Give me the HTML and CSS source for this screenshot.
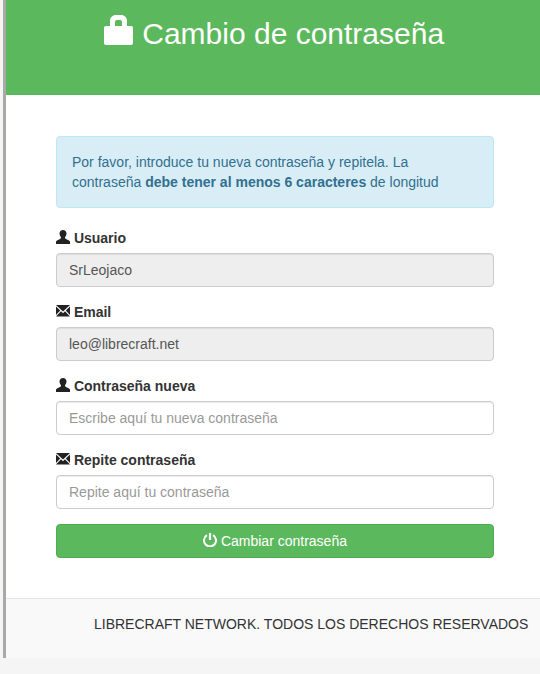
FILE: index.html
```html
<!DOCTYPE html>
<html lang="es">
<head>
    <meta charset="UTF-8">
    <meta name="viewport" content="width=device-width, initial-scale=1.0">
    <title>Cambio de contraseña</title>
    <link rel="stylesheet" href="styles.css">
</head>
<body>
    <div class="panel">
        <div class="panel-heading">
            <h1>
                <svg class="icon-lock" viewBox="0 0 29 30"><path fill="#fff" fill-rule="evenodd" d="M6 11V6c0-3.500 2.500-6 6-6h5c3.500 0 6 2.500 6 6v5h4c1.200 0 2 .8 2 2v15c0 1.200-.8 2-2 2H2c-1.200 0-2-.8-2-2V13c0-1.200.8-2 2-2h4zm5 0h7V7c0-1.200-.8-2-2-2h-3c-1.200 0-2 .8-2 2v4z"/></svg>
                Cambio de contraseña
            </h1>
        </div>
        <div class="panel-body">
            <div class="alert">
                Por favor, introduce tu nueva contraseña y repitela. La contraseña <b>debe tener al menos 6 caracteres</b> de longitud
            </div>
            <form>
                <div class="form-group">
                    <label>
                        <svg class="icon" viewBox="0 0 14 14"><path d="M0 14v-2.200c0-1 1-1.500 2.500-2.100 1.500-.6 2.300-.9 2.500-1.600.1-.5-.1-.9-.5-1.500C3.900 5.800 3.500 4.800 3.500 3.600 3.500 1.400 5 0 7 0s3.500 1.400 3.500 3.600c0 1.200-.4 2.200-1 3-.4.600-.6 1-.5 1.500.2.700 1 1 2.500 1.600 1.500.6 2.500 1.100 2.500 2.100V14H0z"/></svg>
                        Usuario
                    </label>
                    <input type="text" value="SrLeojaco" disabled>
                </div>
                <div class="form-group">
                    <label>
                        <svg class="icon" viewBox="0 0 14 12"><path d="M0 0h14L7 6.500 0 0zm0 1.500 4.200 4L0 10V1.500zm14 0V10L9.800 5.500l4.200-4zM5 6.300l2 1.900 2-1.900L14 11.500H0L5 6.300z"/></svg>
                        Email
                    </label>
                    <input type="text" value="leo@librecraft.net" disabled>
                </div>
                <div class="form-group">
                    <label>
                        <svg class="icon" viewBox="0 0 14 14"><path d="M0 14v-2.200c0-1 1-1.500 2.500-2.100 1.500-.6 2.300-.9 2.500-1.600.1-.5-.1-.9-.5-1.500C3.900 5.800 3.500 4.800 3.500 3.600 3.500 1.400 5 0 7 0s3.500 1.400 3.500 3.600c0 1.200-.4 2.200-1 3-.4.600-.6 1-.5 1.500.2.700 1 1 2.500 1.600 1.500.6 2.500 1.100 2.500 2.100V14H0z"/></svg>
                        Contraseña nueva
                    </label>
                    <input type="password" placeholder="Escribe aquí tu nueva contraseña">
                </div>
                <div class="form-group">
                    <label>
                        <svg class="icon" viewBox="0 0 14 12"><path d="M0 0h14L7 6.500 0 0zm0 1.500 4.200 4L0 10V1.500zm14 0V10L9.800 5.500l4.200-4zM5 6.300l2 1.900 2-1.900L14 11.500H0L5 6.300z"/></svg>
                        Repite contraseña
                    </label>
                    <input type="password" placeholder="Repite aquí tu contraseña">
                </div>
                <button type="button" class="btn-success">
                    <svg class="icon-off" viewBox="0 0 14 14"><path fill="none" stroke="#fff" stroke-width="2" d="M4 2.200A6 6 0 1 0 10 2.200"/><path fill="none" stroke="#fff" stroke-width="2.200" d="M7 0v7"/></svg>
                    Cambiar contraseña
                </button>
            </form>
        </div>
        <div class="panel-footer">LIBRECRAFT NETWORK. TODOS LOS DERECHOS RESERVADOS</div>
    </div>
</body>
</html>
```

FILE: styles.css
```css
* {
    box-sizing: border-box;
}

html {
    background-color: #f5f5f5;
}

body {
    margin: 0;
    height: 674px;
    overflow: hidden;
    font-family: "Liberation Sans", Arial, sans-serif;
    font-size: 14px;
    line-height: 20px;
    color: #333;
}

.panel {
    width: 537px;
    height: 658px;
    margin-left: 3px;
    border-left: 3px solid #a9a9a5;
    background-color: #fff;
}

.panel-heading {
    height: 95px;
    background-color: #5cb85c;
    color: #fff;
    text-align: center;
}

.panel-heading h1 {
    margin: 0;
    padding: 14px 0 0 2px;
    font-size: 30px;
    font-weight: normal;
    line-height: 40px;
}

.icon-lock {
    width: 29px;
    height: 30px;
    margin-right: 1px;
    vertical-align: -1px;
}

.panel-body {
    padding: 41px 46px 40px 50px;
}

.alert {
    height: 72px;
    padding: 15px;
    margin-bottom: 20px;
    border: 1px solid #bce8f1;
    border-radius: 4px;
    background-color: #d9edf7;
    color: #31708f;
}

.form-group {
    margin-bottom: 15px;
}

label {
    display: block;
    margin-bottom: 5px;
    font-weight: bold;
}

.icon {
    width: 14px;
    height: 14px;
    vertical-align: -1px;
    fill: #222;
}

input {
    display: block;
    width: 100%;
    height: 34px;
    padding: 6px 12px;
    border: 1px solid #ccc;
    border-radius: 4px;
    background-color: #fff;
    box-shadow: inset 0 1px 1px rgba(0, 0, 0, 0.075);
    font-family: inherit;
    font-size: 14px;
    color: #555;
}

input:disabled {
    background-color: #eee;
    color: #555;
    opacity: 1;
}

input::placeholder {
    color: #999;
    opacity: 1;
}

.btn-success {
    display: block;
    width: 100%;
    height: 34px;
    padding: 6px 12px;
    border: 1px solid #4cae4c;
    border-radius: 4px;
    background-color: #5cb85c;
    color: #fff;
    font-family: inherit;
    font-size: 14px;
    line-height: 20px;
}

.icon-off {
    width: 14px;
    height: 14px;
    vertical-align: -1px;
}

.panel-footer {
    height: 60px;
    padding: 15px 0 0 88px;
    border-top: 1px solid #e6e6e6;
    background-color: #f9f9f9;
    white-space: nowrap;
}
```
